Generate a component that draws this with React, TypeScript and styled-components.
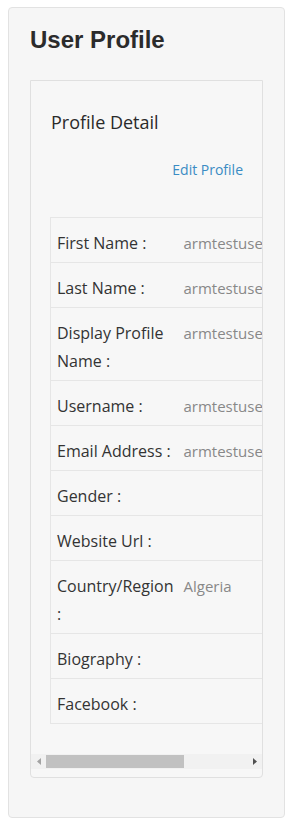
import React from 'react';
import styled, { createGlobalStyle } from 'styled-components';

const GlobalStyle = createGlobalStyle`
  body {
    margin: 7px 8px 8px;
    background: #ffffff;
    font-family: 'Open Sans', 'Noto Sans', sans-serif;
  }
`;

const rows: { label: string; value?: string }[] = [
  { label: 'First Name :', value: 'armtestuser' },
  { label: 'Last Name :', value: 'armtestuser' },
  { label: 'Display Profile Name :', value: 'armtestuser armtestuser' },
  { label: 'Username :', value: 'armtestuser' },
  { label: 'Email Address :', value: 'armtestuser@example.com' },
  { label: 'Gender :' },
  { label: 'Website Url :' },
  { label: 'Country/Region :', value: 'Algeria' },
  { label: 'Biography :' },
  { label: 'Facebook :' },
];

export default function App() {
  return (
    <>
      <GlobalStyle />
      <Panel>
        <Title>User Profile</Title>
        <DetailCard>
          <DetailHeader>
            <DetailTitle>Profile Detail</DetailTitle>
            <EditLink href="#">Edit Profile</EditLink>
          </DetailHeader>

          <ScrollArea>
            <Table>
              <tbody>
                {rows.map((row) => (
                  <Row key={row.label}>
                    <LabelCell>{row.label}</LabelCell>
                    <ValueCell>{row.value}</ValueCell>
                  </Row>
                ))}
              </tbody>
            </Table>
          </ScrollArea>

          <Scrollbar>
            <ArrowButton>
              <svg width="4" height="7" viewBox="0 0 4 7">
                <path d="M4 0 L0 3.5 L4 7 Z" fill="#a3a3a3" />
              </svg>
            </ArrowButton>
            <Track>
              <Thumb />
            </Track>
            <ArrowButton>
              <svg width="4" height="7" viewBox="0 0 4 7">
                <path d="M0 0 L4 3.5 L0 7 Z" fill="#505050" />
              </svg>
            </ArrowButton>
          </Scrollbar>
        </DetailCard>
      </Panel>
    </>
  );
}

const Panel = styled.div`
  display: flex;
  flex-direction: column;
  border: 1px solid #e2e2e2;
  border-radius: 4px;
  background: #f6f6f6;
  padding: 18px 21px 39px;
`;

const Title = styled.h2`
  margin: 0 0 26px;
  font-family: 'Liberation Sans', Arial, sans-serif;
  font-size: 24px;
  font-weight: 700;
  line-height: 28px;
  color: #2b2b2b;
`;

const DetailCard = styled.div`
  display: flex;
  flex-direction: column;
  border: 1px solid #e0e0e0;
  border-radius: 0 0 4px 4px;
  background: #f7f7f7;
  padding-bottom: 8px;
`;

const DetailHeader = styled.div`
  display: flex;
  flex-direction: column;
  padding: 29px 19px 0 20px;
`;

const DetailTitle = styled.h3`
  margin: 0;
  font-size: 18px;
  font-weight: 400;
  line-height: 25px;
  color: #2a2a2a;
`;

const EditLink = styled.a`
  align-self: flex-end;
  margin-top: 25px;
  font-size: 14px;
  line-height: 19px;
  color: #3a8cc4;
  text-decoration: none;
`;

const ScrollArea = styled.div`
  margin-top: 38px;
  padding-left: 19px;
  overflow: hidden;
`;

const Table = styled.table`
  border-collapse: collapse;
  border-top: 1px solid #e6e6e6;
  border-left: 1px solid #e6e6e6;
  width: 300px;
`;

const Row = styled.tr`
  border-bottom: 1px solid #e6e6e6;
`;

const LabelCell = styled.td`
  width: 115px;
  min-width: 115px;
  padding: 11px 6px 5px;
  vertical-align: top;
  font-size: 16px;
  line-height: 28px;
  color: #333333;
`;

const ValueCell = styled.td`
  width: 160px;
  padding: 11px 6px 5px 4px;
  vertical-align: top;
  font-size: 15px;
  line-height: 28px;
  color: #888888;
`;

const Scrollbar = styled.div`
  display: flex;
  height: 15px;
  margin-top: 30px;
  background: #f1f1f1;
`;

const ArrowButton = styled.div`
  display: flex;
  align-items: center;
  justify-content: center;
  width: 15px;
  height: 15px;
  flex-shrink: 0;
`;

const Track = styled.div`
  flex: 1;
  display: flex;
  align-items: center;
`;

const Thumb = styled.div`
  width: 138px;
  height: 13px;
  background: #c1c1c1;
`;
